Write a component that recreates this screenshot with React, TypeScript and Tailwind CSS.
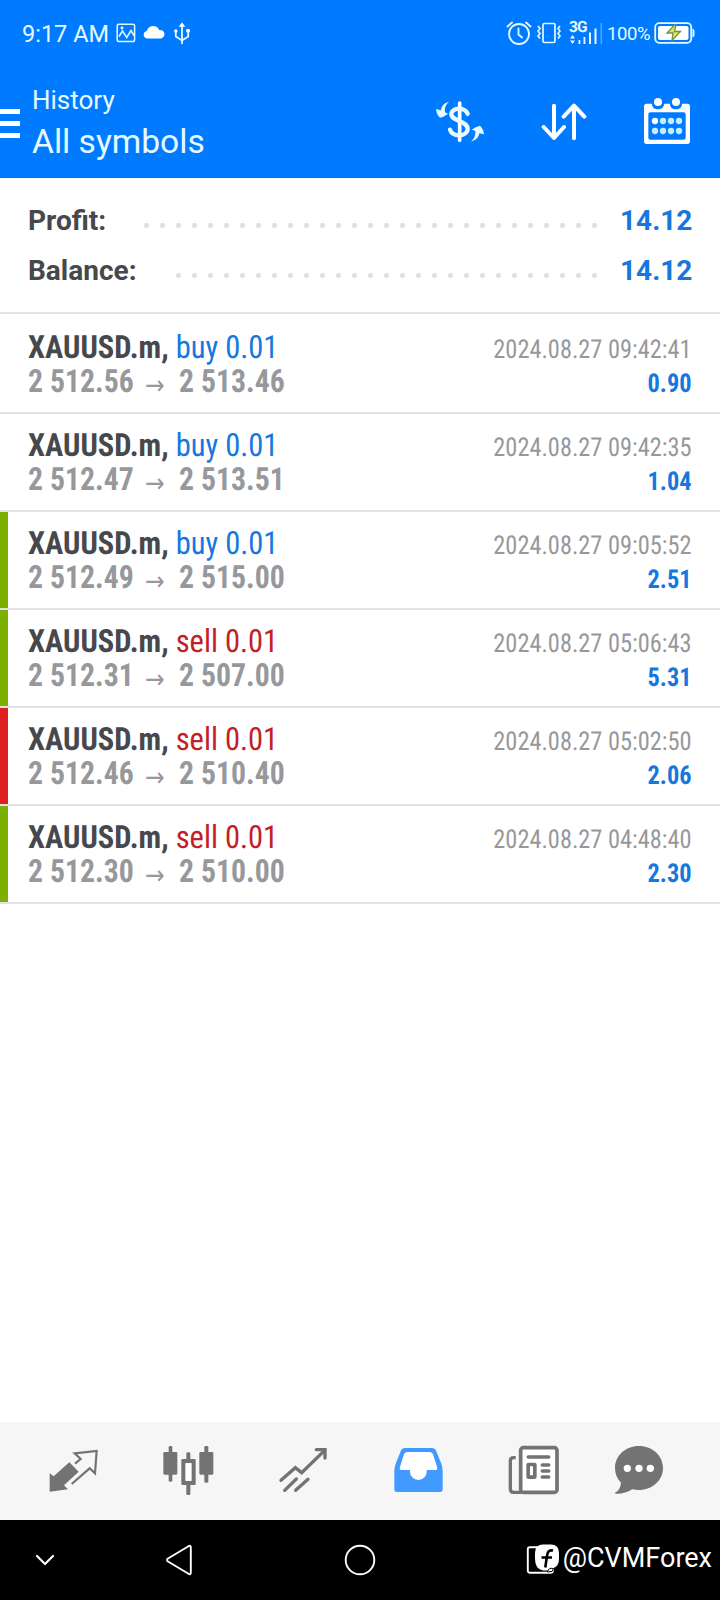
import type { ReactNode } from "react";

interface Deal {
  side: "buy" | "sell";
  open: string;
  close: string;
  time: string;
  profit: string;
  mark?: "tp" | "sl";
}

const deals: Deal[] = [
  { side: "buy", open: "2 512.56", close: "2 513.46", time: "2024.08.27 09:42:41", profit: "0.90" },
  { side: "buy", open: "2 512.47", close: "2 513.51", time: "2024.08.27 09:42:35", profit: "1.04" },
  { side: "buy", open: "2 512.49", close: "2 515.00", time: "2024.08.27 09:05:52", profit: "2.51", mark: "tp" },
  { side: "sell", open: "2 512.31", close: "2 507.00", time: "2024.08.27 05:06:43", profit: "5.31", mark: "tp" },
  { side: "sell", open: "2 512.46", close: "2 510.40", time: "2024.08.27 05:02:50", profit: "2.06", mark: "sl" },
  { side: "sell", open: "2 512.30", close: "2 510.00", time: "2024.08.27 04:48:40", profit: "2.30", mark: "tp" },
];

function StatusBar() {
  return (
    <div className="flex h-[66px] items-center pl-[22px] pr-[24px] text-[#e6faff]">
      <span className="mt-[2px] w-[94px] whitespace-nowrap text-[23.5px] leading-[28px]">9:17 AM</span>
      <svg width="20" height="20" viewBox="0 0 20 20" fill="none" stroke="currentColor" strokeWidth="1.5">
        <rect x="1.2" y="1.2" width="17.4" height="17.4" rx="1.5" />
        <path d="M3 13.5 6.5 8l4.200 6.500 4.300-7 3 5" />
        <circle cx="6" cy="5" r="0.700" />
      </svg>
      <svg className="ml-[7px] -mt-0.5" width="22" height="14" viewBox="0 0 22 14" fill="white">
        <path d="M4 13.500a3.800 3.800 0 0 1-.2-7.500A6.600 6.600 0 0 1 16.200 5 4.300 4.300 0 0 1 18 13.500Z" />
      </svg>
      <svg className="ml-[8px]" width="18" height="23" viewBox="0 0 18 23" fill="none" stroke="currentColor" strokeWidth="1.8">
        <path d="M9 3v19M2.800 10v4.500L9 18.500l6.200-4V9.500" />
        <path d="M6.300 4.500 9 .8l2.700 3.700ZM13.500 7.500h3v2.500h-3Z" fill="currentColor" strokeWidth="0.800" />
        <circle cx="2.800" cy="9" r="1.800" fill="currentColor" stroke="none" />
      </svg>
      <div className="ml-auto flex items-center">
        <svg width="26" height="24" viewBox="0 0 26 24" fill="none" stroke="currentColor" strokeWidth="1.8" strokeLinecap="round">
          <circle cx="13" cy="13" r="10" />
          <path d="M1.500 5.500 6 1.500M24.500 5.500 20 1.500M12.500 7.500v6l3.500 3" />
        </svg>
        <svg className="ml-[5px]" width="24" height="22" viewBox="0 0 24 22" fill="none" stroke="currentColor" strokeWidth="1.700">
          <rect x="6" y="1.500" width="12" height="19" rx="1.500" />
          <path d="M1 4l2 2.500-2 2.500 2 2.500-2 2.500 2 2.500M23 4l-2 2.500 2 2.500-2 2.500 2 2.500-2 2.500" />
        </svg>
        <div className="ml-[8px] grid">
          <span className="col-start-1 row-start-1 -mt-[2px] text-[15.500px] font-bold leading-[18px] tracking-[-1px] [text-rendering:geometricPrecision]">3G</span>
          <svg className="col-start-1 row-start-1" width="35" height="26" viewBox="0 0 35 26" fill="currentColor">
            <path d="M1 18.500 3.500 15 6 18.500ZM1 20.500 3.500 24 6 20.500Z" />
            <path d="M9.500 20h1.800v4H9.500ZM14.500 17h1.800v7h-1.800ZM20 12.500h2V24h-2ZM25.500 8.500h2V24h-2Z" />
            <path d="M31.500 3h1.600v21h-1.600Z" opacity="0.350" />
          </svg>
        </div>
        <span className="ml-[3px] mt-[2px] w-[47px] text-[18.500px] leading-[22px] tracking-[-0.400px]">100%</span>
        <svg width="42" height="22" viewBox="0 0 42 22" fill="none">
          <rect x="1.200" y="1.200" width="36" height="19.600" rx="4" stroke="currentColor" strokeWidth="1.800" />
          <rect x="4" y="4" width="30.500" height="14" rx="2" fill="white" />
          <path d="M38.500 6.500q2 .5 2 2.500v4q0 2-2 2.500Z" fill="currentColor" />
          <path d="M20.500 3 13 11h6l-1 7.500L26.500 9.500h-6L22 3Z" fill="#e6e24a" stroke="#6f8f60" strokeWidth="1.300" />
        </svg>
      </div>
    </div>
  );
}

function Header() {
  return (
    <header className="h-[178px] border-b border-[#1268d0] bg-[#007aff]">
      <StatusBar />
      <div className="flex h-[110px] items-start text-[#e6faff]">
        <div className="mt-[43px] w-5 space-y-[7px]">
          <div className="h-[5px] bg-white" />
          <div className="h-[5px] bg-white" />
          <div className="h-[5px] bg-white" />
        </div>
        <div className="ml-[12px] mt-[19px] whitespace-nowrap">
          <div className="text-[26px] leading-[30px]">History</div>
          <div className="mt-[7px] text-[33.600px] leading-[40px]">All symbols</div>
        </div>
        <div className="ml-auto mr-[29px] mt-[31px] flex">
          <svg width="50" height="48" viewBox="105 52 150 144" fill="none" stroke="currentColor" strokeWidth="11" strokeLinecap="round">
            <path d="M179 70V182" stroke="white" />
            <path d="M203 102C196 82 154 82 154 104c0 20 49 20 49 43 0 24-46 28-53 3" strokeWidth="13" />
            <path d="M147 66C133 70 124 78 123 92l-15-4c1 11 5 20 12 26 9-2 16-6 24-12l-9-4c-2-13 2-24 12-32Z" fill="currentColor" stroke="none" />
            <path d="M213 186c14-4 23-12 25-25l14 3c-1-11-5-20-12-26-9 2-17 6-25 12l11 4c1 13-3 23-13 32Z" fill="currentColor" stroke="none" />
          </svg>
          <svg className="ml-[56px]" width="46" height="48" viewBox="183 291 138 144" fill="none" stroke="white" strokeWidth="12" strokeLinecap="round" strokeLinejoin="round">
            <path d="M222 317V413M191 381l31 33 30-33M282 415V318M251 350l31-33 31 33" />
          </svg>
          <svg className="ml-[56px]" width="48" height="48" viewBox="489 291 144 144" fill="white">
            <path fillRule="evenodd" d="M500 311h16c0 12 8 17 18 17s18-6 18-17h18c0 12 8 17 18 17s18-6 18-17h16q8 0 8 8V424q0 8-8 8H500q-8 0-8-8V319q0-8 8-8ZM511 337q-6 0-6 6v70q0 6 6 6H611q6 0 6-6V343q0-6-6-6Z" />
            <circle cx="534" cy="306" r="12" />
            <circle cx="588" cy="306" r="12" />
            <circle cx="525" cy="363" r="9.500" />
            <g fill="#c4edff">
              <circle cx="549" cy="363" r="9.500" />
              <circle cx="573" cy="363" r="9.500" />
              <circle cx="597" cy="363" r="9.500" />
              <circle cx="525" cy="393" r="9.500" />
              <circle cx="549" cy="393" r="9.500" />
              <circle cx="573" cy="393" r="9.500" />
              <circle cx="597" cy="393" r="9.500" />
            </g>
          </svg>
        </div>
      </div>
    </header>
  );
}

function SummaryRow({ label, value, dots }: { label: string; value: string; dots: number }) {
  return (
    <div className="flex h-[50px] items-center pl-[28px] pr-[28px] text-[28px] font-bold">
      <span className="text-[#47484c]">{label}</span>
      <span className="ml-auto mt-[8px] flex gap-[11px]">
        {Array.from({ length: dots }, (_, i) => (
          <i key={i} className="block size-[5px] rounded-[2px] bg-[#e0e0e1]" />
        ))}
      </span>
      <span className="ml-[23px] w-[72px] text-right text-[#1677dc]">{value}</span>
    </div>
  );
}

function DealRow({ deal }: { deal: Deal }) {
  const mark = deal.mark === "tp" ? "border-[#7cb000]" : deal.mark === "sl" ? "border-[#e02020]" : "border-transparent";
  return (
    <div className="border-b-2 border-[#e2e2e3]">
      <div className={`flex h-[96px] justify-between border-l-8 pl-[20px] pr-[28px] pt-[14px] leading-[34px] whitespace-nowrap [font-stretch:75%] [text-rendering:geometricPrecision] ${mark}`}>
        <div className="text-[32px]">
          <div className="origin-left scale-x-[0.953] font-bold text-[#47484c]">
            XAUUSD.m,{" "}
            <span className={deal.side === "buy" ? "font-normal text-[#1677dc]" : "font-normal text-[#c42024]"}>
              {deal.side} 0.01
            </span>
          </div>
          <div className="flex h-[34px] font-bold text-[#97989b]">
            <span className="w-[117px] origin-left scale-x-[0.930]">{deal.open}</span>
            <span className="mt-[3px] w-[34px] font-['DejaVu_Sans'] text-[26px] font-normal leading-[38px]">→</span>
            <span className="origin-left scale-x-[0.930]">{deal.close}</span>
          </div>
        </div>
        <div className="origin-right scale-x-[0.937] pt-[3px] text-right text-[26px]">
          <div className="text-[#97989b]">{deal.time}</div>
          <div className="font-bold text-[#1677dc]">{deal.profit}</div>
        </div>
      </div>
    </div>
  );
}

function TabIcon({ className = "text-[#737373]", children }: { className?: string; children: ReactNode }) {
  return (
    <svg className={`shrink-0 ${className}`} width="56" height="56" viewBox="0 0 168 168" fill="currentColor">
      {children}
    </svg>
  );
}

function TabBar() {
  return (
    <nav className="flex h-[98px] items-center gap-[59px] bg-[#f6f6f6] pl-[46px]">
      <TabIcon>
        <path d="M11 91 23 100 70 58 98 86 54 127 66 139 11 146Z" />
        <path d="M87 62 104 48 86 31 152 24 147 91 131 76 77 123" fill="none" stroke="currentColor" strokeWidth="6.500" />
      </TabIcon>
      <TabIcon>
        <rect x="23" y="9" width="11" height="107" rx="4" />
        <rect x="7" y="27" width="42" height="68" rx="4" />
        <rect x="76" y="28" width="12" height="128" rx="4" />
        <rect x="61" y="48" width="43" height="78" rx="4" />
        <rect x="73" y="60" width="19" height="54" rx="2" fill="white" />
        <rect x="130" y="9" width="12" height="110" rx="4" />
        <rect x="115" y="27" width="42" height="68" rx="4" />
      </TabIcon>
      <TabIcon>
        <g fill="none" stroke="currentColor" strokeWidth="10" strokeLinecap="round">
          <path d="M15 112 58 74 77 89 146 22" />
          <path d="M121 20H147V45" />
          <path d="M26 142 61 108M59 142 96 109" />
        </g>
      </TabIcon>
      <TabIcon className="text-[#409aff]">
        <path d="M42 15H122Q132 15 136 25L151 62Q155 72 155 84V139Q155 147 147 147H18Q10 147 10 139V84Q10 72 14 62L29 25Q33 15 42 15Z" />
        <path d="M50 27H115Q123 27 126 34L139 75Q140 81 134 81H107V86A25 25 0 0 1 57 86V81H31Q25 81 26 75L39 34Q42 27 50 27Z" fill="white" />
      </TabIcon>
      <TabIcon>
        <path d="M29 44H23Q13 44 13 54V138Q13 148 23 148H52" fill="none" stroke="currentColor" strokeWidth="10" />
        <rect x="44" y="14" width="109" height="134" rx="8" fill="white" stroke="currentColor" strokeWidth="11" />
        <rect x="66.500" y="64.500" width="20" height="38" rx="1" fill="white" stroke="currentColor" strokeWidth="11" />
        <g fill="none" stroke="currentColor" strokeWidth="11" strokeLinecap="round">
          <path d="M67 42H128M109 66H128M109 84H128M109 102H128" />
        </g>
      </TabIcon>
      <TabIcon className="-ml-2.5 text-[#737373]">
        <path d="M84 9C124 9 156 38 156 75S124 141 84 141Q73 141 64 139C48 149 28 154 14 152Q9 151 14 148Q28 140 30 119C18 107 12 92 12 75 12 38 44 9 84 9Z" />
        <g fill="white">
          <circle cx="49" cy="76" r="11" />
          <circle cx="84" cy="76" r="11" />
          <circle cx="118" cy="76" r="11" />
        </g>
      </TabIcon>
    </nav>
  );
}

function SystemBar() {
  return (
    <div className="flex h-20 items-center bg-black pl-[35px] pr-[8px] text-white">
      <svg width="20" height="12" viewBox="0 0 20 12" fill="none" stroke="currentColor" strokeWidth="2.200" strokeLinecap="round" strokeLinejoin="round">
        <path d="M2 2 10 10 18 2" />
      </svg>
      <svg className="ml-[110px]" width="28" height="32" viewBox="0 0 28 32" fill="none" stroke="currentColor" strokeWidth="1.900" strokeLinejoin="round">
        <path d="M3 14.500 23.500 2.200Q25.800 1 25.800 3.500V28.500Q25.800 31 23.500 29.800L3 17.500Q1 16 3 14.500Z" />
      </svg>
      <svg className="ml-[151px]" width="32" height="32" viewBox="0 0 32 32" fill="none" stroke="currentColor" strokeWidth="1.900">
        <circle cx="16" cy="16" r="14.300" />
      </svg>
      <svg className="ml-[150px]" width="34" height="32" viewBox="0 0 34 32" fill="none">
        <rect x="1.800" y="3.200" width="25" height="25.500" rx="2" stroke="white" strokeWidth="1.900" />
        <path d="M17 .5H25Q33 .5 33 9V15Q33 22 27.500 24L22 26.500H17Q9 25 9 15V9Q9 .5 17 .5Z" fill="white" />
        <path d="M27 6.500C22 5.500 21.500 9 20.800 13L19.300 23.500M15.500 13.500H26" stroke="black" strokeWidth="2.600" />
        <path d="M21.500 28C22 25 24 23.700 27.500 24.500L26 27.500Z" fill="white" stroke="black" />
      </svg>
      <span className="ml-auto -mt-[3px] text-[27px] leading-none">@CVMForex</span>
    </div>
  );
}

export default function App() {
  return (
    <div className="flex h-[1600px] w-[720px] flex-col overflow-hidden bg-white font-['Roboto','Liberation_Sans',sans-serif]">
      <Header />
      <section className="h-[136px] border-b-2 border-[#e2e2e3] pt-[18px]">
        <SummaryRow label="Profit:" value="14.12" dots={29} />
        <SummaryRow label="Balance:" value="14.12" dots={27} />
      </section>
      <main className="flex-1 pt-[2px]">
        {deals.map((deal) => (
          <DealRow key={deal.time} deal={deal} />
        ))}
      </main>
      <TabBar />
      <SystemBar />
    </div>
  );
}
